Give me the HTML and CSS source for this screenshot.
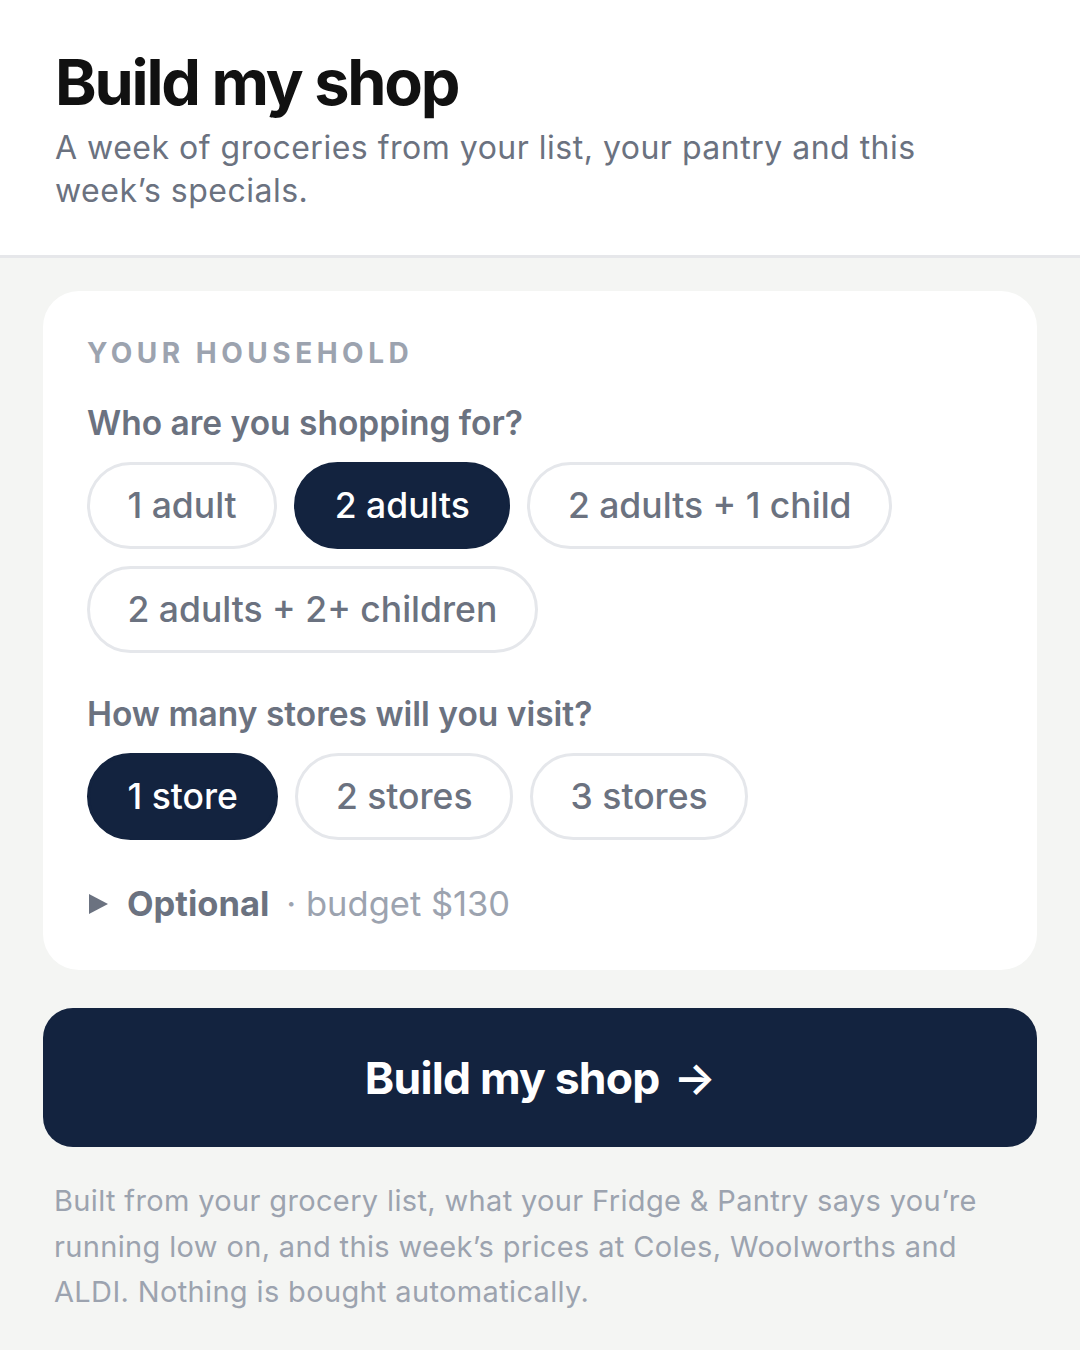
FILE: index.html
```html
<!DOCTYPE html>
<html lang="en">
<head>
<meta charset="utf-8">
<title>Build my shop</title>
<link rel="stylesheet" href="styles.css">
</head>
<body>
<header class="hero">
  <h1 class="hero-title">Build my shop</h1>
  <p class="hero-sub">A week of groceries from your list, your pantry and this week’s specials.</p>
</header>
<main class="content">
  <section class="card">
    <div class="eyebrow">YOUR HOUSEHOLD</div>
    <div class="question">Who are you shopping for?</div>
    <div class="chips">
      <button class="chip">1 adult</button>
      <button class="chip chip-on">2 adults</button>
      <button class="chip">2 adults + 1 child</button>
      <button class="chip">2 adults + 2+ children</button>
    </div>
    <div class="question question-2">How many stores will you visit?</div>
    <div class="chips">
      <button class="chip chip-on">1 store</button>
      <button class="chip">2 stores</button>
      <button class="chip">3 stores</button>
    </div>
    <div class="optional">
      <span class="tri"></span>
      <span class="opt-label">Optional</span>
      <span class="opt-meta">· budget $130</span>
    </div>
  </section>
  <button class="cta">Build my shop <span class="arrow">→</span></button>
  <p class="footnote">Built from your grocery list, what your Fridge &amp; Pantry says you’re running low on, and this week’s prices at Coles, Woolworths and ALDI. Nothing is bought automatically.</p>
</main>
</body>
</html>
```
FILE: styles.css
```css
* { box-sizing: border-box; }
html, body { margin: 0; padding: 0; }
body {
  background: #f4f5f3;
  font-family: Inter, "Noto Sans", sans-serif;
  width: 1080px;
  min-height: 1350px;
}
.hero {
  background: #ffffff;
  border-bottom: 3px solid #e6e7ea;
  padding: 44px 55px 43px;
}
.hero-title {
  margin: 0;
  font-size: 63px;
  line-height: 76px;
  font-weight: 700;
  letter-spacing: -2.2px;
  color: #111111;
}
.hero-sub {
  margin: 6px 0 0;
  font-size: 32px;
  line-height: 43px;
  color: #6b7280;
  letter-spacing: 0.5px;
  max-width: 900px;
}
.content {
  padding: 33px 43px 40px;
}
.card {
  background: #ffffff;
  border-radius: 36px;
  padding: 45px 44px 46px;
}
.eyebrow {
  font-size: 28px;
  font-weight: 700;
  letter-spacing: 4.5px;
  color: #9ca3af;
  line-height: 34px;
}
.question {
  margin-top: 33px;
  font-size: 33.5px;
  line-height: 40px;
  font-weight: 600;
  color: #6b7280;
}
.question-2 { margin-top: 40px; }
.chips {
  display: flex;
  flex-wrap: wrap;
  gap: 17px;
  margin-top: 19px;
}
.chips + .question { margin-top: 41px; }
.chip {
  height: 87px;
  border: 3px solid #e5e7eb;
  background: #ffffff;
  border-radius: 44px;
  padding: 0 37.5px;
  font-family: inherit;
  font-size: 35.5px;
  font-weight: 500;
  color: #6b7280;
}
.chip-on {
  background: #13233f;
  border-color: #13233f;
  color: #ffffff;
}
.optional {
  display: flex;
  align-items: center;
  margin-top: 44px;
  font-size: 34.5px;
  line-height: 40px;
}
.tri {
  width: 0;
  height: 0;
  border-left: 19px solid #6b7280;
  border-top: 10px solid transparent;
  border-bottom: 10px solid transparent;
  margin-left: 2px;
  margin-right: 19px;
}
.opt-label {
  font-weight: 700;
  color: #6b7280;
}
.opt-meta {
  margin-left: 17px;
  color: #9ca3af;
}
.cta {
  display: flex;
  align-items: center;
  justify-content: center;
  width: 100%;
  height: 139px;
  margin-top: 38px;
  border: none;
  border-radius: 30px;
  background: #13233f;
  color: #ffffff;
  font-family: inherit;
  font-size: 44.5px;
  font-weight: 700;
  letter-spacing: -0.8px;
}
.arrow {
  margin-left: 14px;
  font-weight: 600;
}
.footnote {
  margin: 31px 0 0;
  padding: 0 11px;
  font-size: 29px;
  line-height: 45.5px;
  color: #9ca3af;
  letter-spacing: 0.35px;
}
```
